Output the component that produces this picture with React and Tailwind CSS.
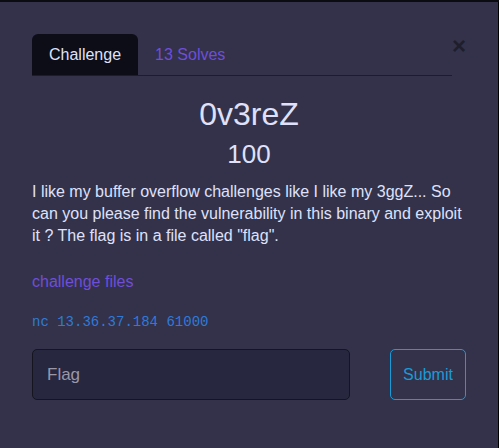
export default function App() {
  return (
    <div className="w-[499px] h-[448px] bg-black overflow-hidden font-['Liberation_Sans',Arial,sans-serif]">
      <div className="h-[2px] bg-[#0b0b12]" />
      <div className="w-[498px] h-[446px] bg-[#33324a] px-8 pt-8">
        <div className="flex items-start">
          <div className="flex-1 flex items-end border-b border-[#1c1c2b]">
            <div className="h-[41px] px-[17px] flex items-center rounded-t-md bg-[#0d0d17] text-[16px] text-[#dfe1fb]">
              Challenge
            </div>
            <div className="h-[41px] px-[17px] flex items-center text-[16px] text-[#6f4ed9]">
              13 Solves
            </div>
          </div>
          <button className="w-[14px] text-center text-[24px] leading-none font-bold text-[#1e1e2d]">
            ×
          </button>
        </div>

        <h1 className="mt-[18px] text-center text-[32px] leading-[40px] text-[#dfe1fb]">
          0v3reZ
        </h1>
        <div className="mt-[4px] text-center text-[26px] leading-[32px] text-[#dfe1fb]">
          100
        </div>
        <p className="mt-[11px] text-[16px] leading-[22px] text-[#dfe1fb]">
          I like my buffer overflow challenges like I like my 3ggZ... So can you
          please find the vulnerability in this binary and exploit it ? The flag
          is in a file called "flag".
        </p>

        <a className="block mt-[24px] text-[16px] leading-[22px] text-[#6f4ed9]">
          challenge files
        </a>

        <div className="mt-[19px] font-['Liberation_Mono',monospace] text-[14px] leading-[20px] text-[#2f7ad9]">
          nc 13.36.37.184 61000
        </div>

        <div className="mt-[17px] flex justify-between">
          <div className="w-[318px] h-[51px] rounded-[5px] border border-[#15151f] bg-[#272740] px-[14px] flex items-center text-[17px] text-[#9a98a8]">
            Flag
          </div>
          <button className="w-[76px] h-[51px] rounded-[5px] border border-[#1a9bd7] text-[16px] text-[#1a9bd7]">
            Submit
          </button>
        </div>
      </div>
    </div>
  );
}
